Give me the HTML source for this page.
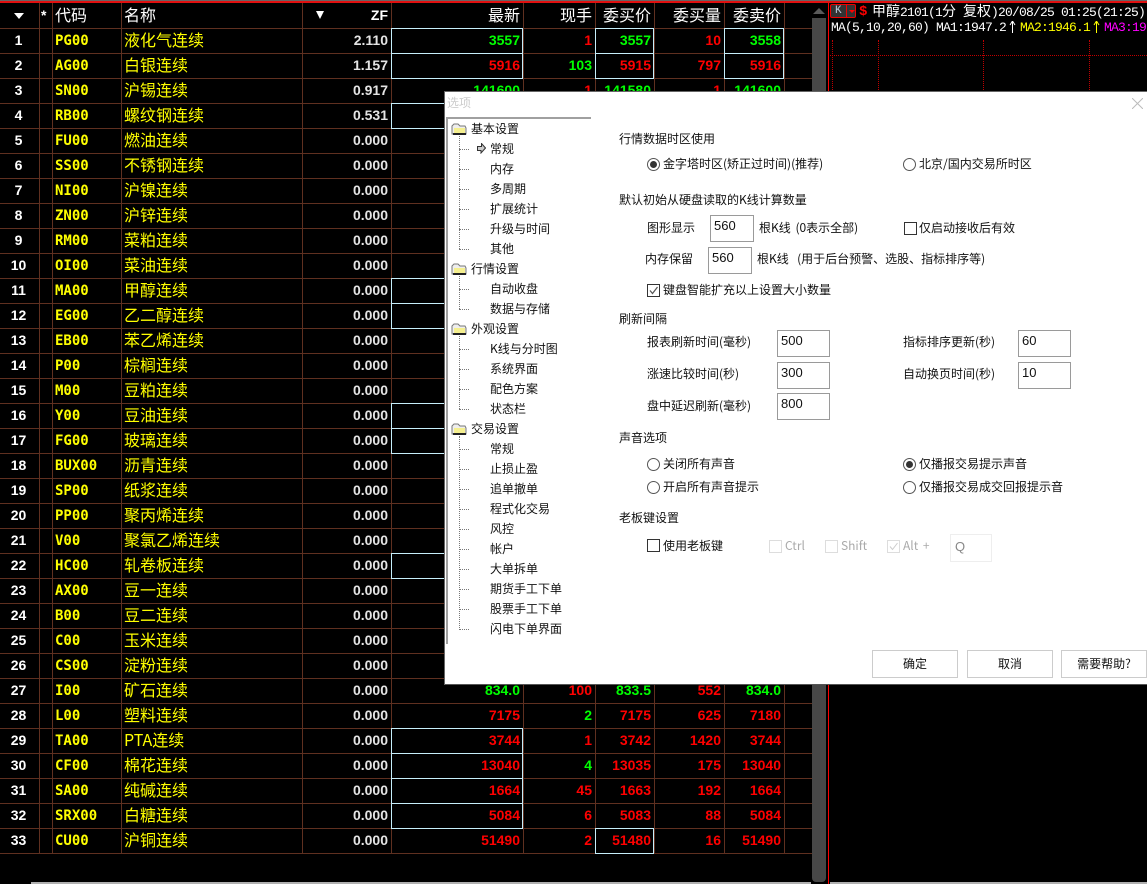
<!DOCTYPE html>
<html><head><meta charset="utf-8"><title>选项</title>
<style>
html,body{margin:0;padding:0;background:#000;width:1147px;height:884px;overflow:hidden}
#top{position:absolute;left:0;top:0;width:1147px;height:3px;background:linear-gradient(#666 0,#666 1px,#e01010 1px,#e01010 3px)}
#g{position:absolute;left:0;top:3px;width:812px}
.r{display:grid;grid-template-columns:40px 13px 69px 181px 89px 132px 72px 59px 70px 60px 27px;height:25px}
.h{height:26px}
.r i{font-style:normal;display:block;box-sizing:border-box;border-right:1px solid #5f3020;border-bottom:1px solid #5f3020;position:relative;height:100%;white-space:nowrap;font:bold 14px/23px "Liberation Sans",sans-serif;color:#fff}
.r i:nth-child(1){text-align:center;padding-right:2px}
.r i:nth-child(3){color:#ff0;padding-left:2px;font:bold 14px/24px "DejaVu Sans Mono",monospace}
.r i:nth-child(4){color:#ff0;padding-left:2px;font:16px/20px "WenQuanYi Zen Hei","Noto Sans CJK SC",sans-serif}
.r i:nth-child(n+5){text-align:right;padding-right:3px}
.r i:nth-child(5){color:#e4e4e4;padding-right:3px}
.r i:nth-child(11){border-right:0}
.h i,.r.h i:nth-child(3),.r.h i:nth-child(4),.r.h i:nth-child(n+5){font:16px/23px "WenQuanYi Zen Hei","Noto Sans CJK SC",sans-serif;color:#fff}
.r.h i:nth-child(5){font:bold 14px/24px "Liberation Sans",sans-serif}
.r i.G{color:#0f0}.r i.R{color:#f00}
.x::after{content:"";position:absolute;left:-1px;top:-1px;right:0;bottom:-1px;border:1px solid #c6eefa}
.t{position:absolute;width:0;height:0;border-left:5px solid transparent;border-right:5px solid transparent;border-top:6px solid #fff}
#sb{position:absolute;left:812px;top:18px;width:14px;height:864px;background:#474747;border-radius:0 0 4px 4px}
#up{position:absolute;left:813px;top:8px;width:0;height:0;border-left:6px solid transparent;border-right:6px solid transparent;border-bottom:6px solid #5a5a5a}
#rl{position:absolute;left:828px;top:3px;width:1px;height:881px;background:#f00}
#bot{position:absolute;left:31px;top:882px;width:780px;height:2px;background:#b0b0b0}
#bot2{position:absolute;left:830px;top:882px;width:317px;height:2px;background:#b0b0b0}
.dv{position:absolute;width:0;border-left:1px dotted #c00000;top:40px;height:60px}
.dh{position:absolute;left:830px;width:317px;border-top:1px dotted #c00000;top:55px}
.m{position:absolute;font:13px/16px "Liberation Mono",monospace;letter-spacing:-.8px;color:#fff;white-space:pre}
.m em{font:14px/16px "WenQuanYi Zen Hei","Noto Sans CJK SC",sans-serif;letter-spacing:0}
#dlg{position:absolute;left:444px;top:91px;width:703px;height:594px;background:#fff;box-shadow:inset 1px 1px 0 #666,inset 0 -1px 0 #555}
#dlg span,#dlg b{position:absolute;font:12px/16px "Noto Sans CJK SC","Liberation Sans",sans-serif;color:#111;white-space:nowrap;font-weight:400;margin-top:-8px}
#dlg .in{position:absolute;box-sizing:border-box;border:1px solid #9a9a9a;width:53px;height:27px;font:13px/16px "Liberation Sans",sans-serif;color:#111;padding:2px 0 0 3px}
.rd{position:absolute;box-sizing:border-box;width:13px;height:13px;border:1px solid #555;border-radius:50%;background:#fff}
.rd.on::after{content:"";position:absolute;left:2px;top:2px;width:7px;height:7px;border-radius:50%;background:#333}
.cb{position:absolute;box-sizing:border-box;width:13px;height:13px;border:1px solid #333;background:#fff}
.cb.d{border-color:#ddd}
.cb svg{position:absolute;left:0;top:0}
.btn{position:absolute;box-sizing:border-box;height:28px;border:1px solid #ccc;top:559px;width:86px;text-align:center;font:12px/26px "Noto Sans CJK SC",sans-serif;color:#111}
#tv{position:absolute;left:2px;top:26px;width:145px;height:2px;background:#a0a0a0}
#tl{position:absolute;left:2px;top:26px;width:2px;height:527px;background:#a0a0a0}
.dy{position:absolute;left:15px;border-left:1px dotted #777;width:0}
.dx{position:absolute;left:15px;width:10px;border-top:1px dotted #777}
.fd{position:absolute;left:7px}
</style></head><body>
<div id="top"></div>
<div id="g">
<div class="r h"><i></i><i></i><i>代码</i><i>名称</i><i>ZF</i><i>最新</i><i>现手</i><i>委买价</i><i>委买量</i><i>委卖价</i><i></i></div>
<div class="r"><i>1</i><i></i><i>PG00</i><i>液化气连续</i><i>2.110</i><i class="G x">3557</i><i class="R">1</i><i class="G x">3557</i><i class="R">10</i><i class="G x">3558</i><i></i></div>
<div class="r"><i>2</i><i></i><i>AG00</i><i>白银连续</i><i>1.157</i><i class="R x">5916</i><i class="G">103</i><i class="R x">5915</i><i class="R">797</i><i class="R x">5916</i><i></i></div>
<div class="r"><i>3</i><i></i><i>SN00</i><i>沪锡连续</i><i>0.917</i><i class="G">141600</i><i class="R">1</i><i class="G">141580</i><i class="R">1</i><i class="G">141600</i><i></i></div>
<div class="r"><i>4</i><i></i><i>RB00</i><i>螺纹钢连续</i><i>0.531</i><i class="x"></i><i></i><i></i><i></i><i></i><i></i></div>
<div class="r"><i>5</i><i></i><i>FU00</i><i>燃油连续</i><i>0.000</i><i></i><i></i><i></i><i></i><i></i><i></i></div>
<div class="r"><i>6</i><i></i><i>SS00</i><i>不锈钢连续</i><i>0.000</i><i></i><i></i><i></i><i></i><i></i><i></i></div>
<div class="r"><i>7</i><i></i><i>NI00</i><i>沪镍连续</i><i>0.000</i><i></i><i></i><i></i><i></i><i></i><i></i></div>
<div class="r"><i>8</i><i></i><i>ZN00</i><i>沪锌连续</i><i>0.000</i><i></i><i></i><i></i><i></i><i></i><i></i></div>
<div class="r"><i>9</i><i></i><i>RM00</i><i>菜粕连续</i><i>0.000</i><i></i><i></i><i></i><i></i><i></i><i></i></div>
<div class="r"><i>10</i><i></i><i>OI00</i><i>菜油连续</i><i>0.000</i><i></i><i></i><i></i><i></i><i></i><i></i></div>
<div class="r"><i>11</i><i></i><i>MA00</i><i>甲醇连续</i><i>0.000</i><i class="x"></i><i></i><i></i><i></i><i></i><i></i></div>
<div class="r"><i>12</i><i></i><i>EG00</i><i>乙二醇连续</i><i>0.000</i><i class="x"></i><i></i><i></i><i></i><i></i><i></i></div>
<div class="r"><i>13</i><i></i><i>EB00</i><i>苯乙烯连续</i><i>0.000</i><i></i><i></i><i></i><i></i><i></i><i></i></div>
<div class="r"><i>14</i><i></i><i>P00</i><i>棕榈连续</i><i>0.000</i><i></i><i></i><i></i><i></i><i></i><i></i></div>
<div class="r"><i>15</i><i></i><i>M00</i><i>豆粕连续</i><i>0.000</i><i></i><i></i><i></i><i></i><i></i><i></i></div>
<div class="r"><i>16</i><i></i><i>Y00</i><i>豆油连续</i><i>0.000</i><i class="x"></i><i></i><i></i><i></i><i></i><i></i></div>
<div class="r"><i>17</i><i></i><i>FG00</i><i>玻璃连续</i><i>0.000</i><i class="x"></i><i></i><i></i><i></i><i></i><i></i></div>
<div class="r"><i>18</i><i></i><i>BUX00</i><i>沥青连续</i><i>0.000</i><i></i><i></i><i></i><i></i><i></i><i></i></div>
<div class="r"><i>19</i><i></i><i>SP00</i><i>纸浆连续</i><i>0.000</i><i></i><i></i><i></i><i></i><i></i><i></i></div>
<div class="r"><i>20</i><i></i><i>PP00</i><i>聚丙烯连续</i><i>0.000</i><i></i><i></i><i></i><i></i><i></i><i></i></div>
<div class="r"><i>21</i><i></i><i>V00</i><i>聚氯乙烯连续</i><i>0.000</i><i></i><i></i><i></i><i></i><i></i><i></i></div>
<div class="r"><i>22</i><i></i><i>HC00</i><i>轧卷板连续</i><i>0.000</i><i class="x"></i><i></i><i></i><i></i><i></i><i></i></div>
<div class="r"><i>23</i><i></i><i>AX00</i><i>豆一连续</i><i>0.000</i><i></i><i></i><i></i><i></i><i></i><i></i></div>
<div class="r"><i>24</i><i></i><i>B00</i><i>豆二连续</i><i>0.000</i><i></i><i></i><i></i><i></i><i></i><i></i></div>
<div class="r"><i>25</i><i></i><i>C00</i><i>玉米连续</i><i>0.000</i><i></i><i></i><i></i><i></i><i></i><i></i></div>
<div class="r"><i>26</i><i></i><i>CS00</i><i>淀粉连续</i><i>0.000</i><i></i><i></i><i></i><i></i><i></i><i></i></div>
<div class="r"><i>27</i><i></i><i>I00</i><i>矿石连续</i><i>0.000</i><i class="G">834.0</i><i class="R">100</i><i class="G">833.5</i><i class="R">552</i><i class="G">834.0</i><i></i></div>
<div class="r"><i>28</i><i></i><i>L00</i><i>塑料连续</i><i>0.000</i><i class="R">7175</i><i class="G">2</i><i class="R">7175</i><i class="R">625</i><i class="R">7180</i><i></i></div>
<div class="r"><i>29</i><i></i><i>TA00</i><i>PTA连续</i><i>0.000</i><i class="R x">3744</i><i class="R">1</i><i class="R">3742</i><i class="R">1420</i><i class="R">3744</i><i></i></div>
<div class="r"><i>30</i><i></i><i>CF00</i><i>棉花连续</i><i>0.000</i><i class="R x">13040</i><i class="G">4</i><i class="R">13035</i><i class="R">175</i><i class="R">13040</i><i></i></div>
<div class="r"><i>31</i><i></i><i>SA00</i><i>纯碱连续</i><i>0.000</i><i class="R x">1664</i><i class="R">45</i><i class="R">1663</i><i class="R">192</i><i class="R">1664</i><i></i></div>
<div class="r"><i>32</i><i></i><i>SRX00</i><i>白糖连续</i><i>0.000</i><i class="R x">5084</i><i class="R">6</i><i class="R">5083</i><i class="R">88</i><i class="R">5084</i><i></i></div>
<div class="r"><i>33</i><i></i><i>CU00</i><i>沪铜连续</i><i>0.000</i><i class="R">51490</i><i class="R">2</i><i class="R x">51480</i><i class="R">16</i><i class="R">51490</i><i></i></div>
</div>
<div class="t" style="left:14px;top:13px"></div>
<div class="t" style="left:316px;top:11px;border-left-width:4px;border-right-width:4px;border-top-width:8px"></div>
<div style="position:absolute;left:41px;top:6px;color:#fff;font:bold 14px/18px 'Liberation Sans',sans-serif">*</div>
<div id="up"></div><div id="sb"></div><div id="rl"></div>
<div id="bot"></div><div id="bot2"></div>
<div class="dv" style="left:832px"></div><div class="dv" style="left:878px"></div><div class="dv" style="left:983px"></div><div class="dv" style="left:1089px"></div><div class="dh"></div>
<div style="position:absolute;left:830px;top:4px;width:24px;height:12px;border:1px solid #e00;border-radius:2px;background:#333"></div>
<div style="position:absolute;left:846px;top:4px;width:1px;height:14px;background:#e00"></div>
<div class="m" style="left:835px;top:3px;font-size:11px;color:#bcd;letter-spacing:0">K</div>
<div style="position:absolute;left:849px;top:10px;width:0;height:0;border-left:3px solid transparent;border-right:3px solid transparent;border-top:3px solid #f00"></div>
<div class="m" style="left:859px;top:4px;color:#f00;font-weight:bold;font-size:14px">$</div>
<div class="m" style="left:872px;top:3px"><em>甲醇</em>2101(1<em>分</em> <em>复权</em>)20/08/25 01:25(21:25)</div>
<div class="m" style="left:831px;top:20px">MA(5,10,20,60)</div>
<div class="m" style="left:936px;top:20px">MA1:1947.2</div>
<svg style="position:absolute;left:1009px;top:21px" width="7" height="12"><path d="M3.5 0V12M1 4L3.5 0L6 4" stroke="#fff" fill="none"/></svg>
<div class="m" style="left:1020px;top:20px;color:#ff0">MA2:1946.1</div>
<svg style="position:absolute;left:1093px;top:21px" width="7" height="12"><path d="M3.5 0V12M1 4L3.5 0L6 4" stroke="#ff0" fill="none"/></svg>
<div class="m" style="left:1104px;top:20px;color:#f0f">MA3:19</div>

<div id="dlg">
<span style="left:3px;top:12px;color:#ccc">选项</span>
<svg style="position:absolute;left:688px;top:7px" width="11" height="11"><path d="M0 0L11 11M11 0L0 11" stroke="#bbb" fill="none"/></svg>
<div id="tv"></div><div id="tl"></div>
<div class="dy" style="top:45px;height:113px"></div>
<div class="dy" style="top:185px;height:33px"></div>
<div class="dy" style="top:245px;height:73px"></div>
<div class="dy" style="top:345px;height:192px"></div>

<svg class="fd" style="top:32px" width="16" height="12"><path d="M1 3L3 1H7L9 3H14L15 5V11H1Z" fill="#eee" stroke="#777"/><rect x="3" y="5" width="11" height="5" fill="#f5f090"/><path d="M2 11H15" stroke="#222" stroke-width="2"/></svg>
<svg class="fd" style="top:172px" width="16" height="12"><path d="M1 3L3 1H7L9 3H14L15 5V11H1Z" fill="#eee" stroke="#777"/><rect x="3" y="5" width="11" height="5" fill="#f5f090"/><path d="M2 11H15" stroke="#222" stroke-width="2"/></svg>
<svg class="fd" style="top:232px" width="16" height="12"><path d="M1 3L3 1H7L9 3H14L15 5V11H1Z" fill="#eee" stroke="#777"/><rect x="3" y="5" width="11" height="5" fill="#f5f090"/><path d="M2 11H15" stroke="#222" stroke-width="2"/></svg>
<svg class="fd" style="top:332px" width="16" height="12"><path d="M1 3L3 1H7L9 3H14L15 5V11H1Z" fill="#eee" stroke="#777"/><rect x="3" y="5" width="11" height="5" fill="#f5f090"/><path d="M2 11H15" stroke="#222" stroke-width="2"/></svg>
<svg style="position:absolute;left:33px;top:52px" width="9" height="11"><path d="M0.5 3.5H4.5V0.5L8.5 5L4 10V7.5H0.5Z" fill="#ccc" stroke="#333"/></svg>

<div class="dx" style="top:58px"></div><div class="dx" style="top:78px"></div><div class="dx" style="top:98px"></div><div class="dx" style="top:118px"></div><div class="dx" style="top:138px"></div><div class="dx" style="top:158px"></div>
<div class="dx" style="top:198px"></div><div class="dx" style="top:218px"></div>
<div class="dx" style="top:258px"></div><div class="dx" style="top:278px"></div><div class="dx" style="top:298px"></div><div class="dx" style="top:318px"></div>
<div class="dx" style="top:358px"></div><div class="dx" style="top:378px"></div><div class="dx" style="top:398px"></div><div class="dx" style="top:418px"></div><div class="dx" style="top:438px"></div><div class="dx" style="top:458px"></div><div class="dx" style="top:478px"></div><div class="dx" style="top:498px"></div><div class="dx" style="top:518px"></div><div class="dx" style="top:538px"></div>

<span style="left:27px;top:38px">基本设置</span>
<span style="left:46px;top:58px">常规</span>
<span style="left:46px;top:78px">内存</span>
<span style="left:46px;top:98px">多周期</span>
<span style="left:46px;top:118px">扩展统计</span>
<span style="left:46px;top:138px">升级与时间</span>
<span style="left:46px;top:158px">其他</span>
<span style="left:27px;top:178px">行情设置</span>
<span style="left:46px;top:198px">自动收盘</span>
<span style="left:46px;top:218px">数据与存储</span>
<span style="left:27px;top:238px">外观设置</span>
<span style="left:46px;top:258px">K线与分时图</span>
<span style="left:46px;top:278px">系统界面</span>
<span style="left:46px;top:298px">配色方案</span>
<span style="left:46px;top:318px">状态栏</span>
<span style="left:27px;top:338px">交易设置</span>
<span style="left:46px;top:358px">常规</span>
<span style="left:46px;top:378px">止损止盈</span>
<span style="left:46px;top:398px">追单撤单</span>
<span style="left:46px;top:418px">程式化交易</span>
<span style="left:46px;top:438px">风控</span>
<span style="left:46px;top:458px">帐户</span>
<span style="left:46px;top:478px">大单拆单</span>
<span style="left:46px;top:498px">期货手工下单</span>
<span style="left:46px;top:518px">股票手工下单</span>
<span style="left:46px;top:538px">闪电下单界面</span>

<span style="left:175px;top:48px">行情数据时区使用</span>
<div class="rd on" style="left:203px;top:67px"></div><span style="left:219px;top:73px">金字塔时区(矫正过时间)(推荐)</span>
<div class="rd" style="left:459px;top:67px"></div><span style="left:475px;top:73px">北京/国内交易所时区</span>
<span style="left:175px;top:109px">默认初始从硬盘读取的K线计算数量</span>
<span style="left:203px;top:137px">图形显示</span>
<div class="in" style="left:266px;top:124px;width:44px">560</div>
<span style="left:315px;top:137px;word-spacing:2px">根K线 (0表示全部)</span>
<div class="cb" style="left:460px;top:131px"></div><span style="left:475px;top:137px">仅启动接收后有效</span>
<span style="left:201px;top:168px">内存保留</span>
<div class="in" style="left:264px;top:156px;width:44px">560</div>
<span style="left:313px;top:168px;word-spacing:1.5px">根K线&nbsp;&nbsp;(用于后台预警、选股、指标排序等)</span>
<div class="cb" style="left:203px;top:193px"><svg width="11" height="11"><path d="M2 5.5L4.5 8.5L9.5 2" stroke="#555" fill="none" stroke-width="1.2"/></svg></div><span style="left:219px;top:199px">键盘智能扩充以上设置大小数量</span>
<span style="left:175px;top:228px">刷新间隔</span>
<span style="left:203px;top:251px">报表刷新时间(毫秒)</span><div class="in" style="left:333px;top:239px">500</div>
<span style="left:459px;top:251px">指标排序更新(秒)</span><div class="in" style="left:574px;top:239px">60</div>
<span style="left:203px;top:283px">涨速比较时间(秒)</span><div class="in" style="left:333px;top:271px">300</div>
<span style="left:459px;top:283px">自动换页时间(秒)</span><div class="in" style="left:574px;top:271px">10</div>
<span style="left:203px;top:315px">盘中延迟刷新(毫秒)</span><div class="in" style="left:333px;top:302px">800</div>
<span style="left:175px;top:347px">声音选项</span>
<div class="rd" style="left:203px;top:367px"></div><span style="left:219px;top:373px">关闭所有声音</span>
<div class="rd" style="left:203px;top:390px"></div><span style="left:219px;top:396px">开启所有声音提示</span>
<div class="rd on" style="left:459px;top:367px"></div><span style="left:475px;top:373px">仅播报交易提示声音</span>
<div class="rd" style="left:459px;top:390px"></div><span style="left:475px;top:396px">仅播报交易成交回报提示音</span>
<span style="left:175px;top:427px">老板键设置</span>
<div class="cb" style="left:203px;top:448px"></div><span style="left:219px;top:455px">使用老板键</span>
<div class="cb d" style="left:325px;top:449px"></div><span style="left:341px;top:455px;color:#aaa">Ctrl</span>
<div class="cb d" style="left:381px;top:449px"></div><span style="left:397px;top:455px;color:#aaa">Shift</span>
<div class="cb d" style="left:443px;top:449px"><svg width="11" height="11"><path d="M2 5.5L4.5 8.5L9.5 2" stroke="#ccc" fill="none"/></svg></div><span style="left:459px;top:455px;color:#aaa;word-spacing:2px">Alt +</span>
<div class="in" style="left:506px;top:443px;width:42px;height:28px;border:1px solid #eee;color:#888;padding:4px 0 0 4px">Q</div>
<div class="btn" style="left:428px">确定</div>
<div class="btn" style="left:523px">取消</div>
<div class="btn" style="left:617px">需要帮助?</div>
</div>
</body></html>
